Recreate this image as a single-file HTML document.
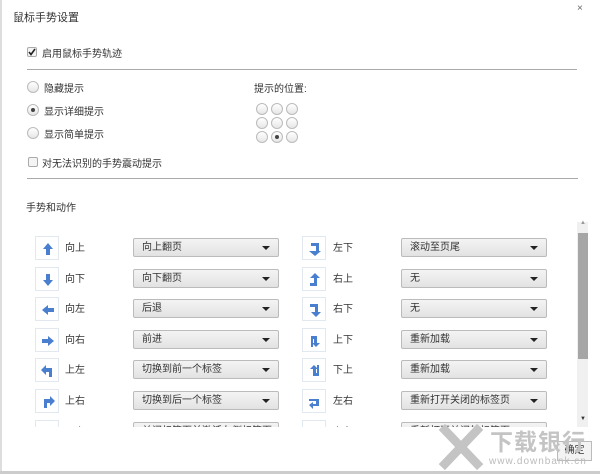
<!DOCTYPE html><html><head><meta charset="utf-8"><style>
*{margin:0;padding:0;box-sizing:border-box}
body{width:600px;height:474px;background:#ccc;position:relative;overflow:hidden;font-family:"Liberation Sans","Noto Sans CJK SC",sans-serif;font-size:10px;color:#333}
.dlg{position:absolute;left:0;top:0;width:600px;height:471px;background:#fff;border-left:2px solid #ddd}
.a{position:absolute;white-space:nowrap}
.hr{position:absolute;height:1px;background:#aaa;left:25px;width:551px}
.rad{position:absolute;width:12px;height:12px;border-radius:50%;border:1px solid #bbb;background:linear-gradient(#fff,#e6e6e6)}
.dot{position:absolute;width:4px;height:4px;border-radius:50%;background:#444;left:3px;top:3px}
.cb{position:absolute;width:10px;height:10px;border:1px solid #aaa;background:#f4f4f4;border-radius:2px}
.ib{position:absolute;width:24px;height:24px;border:1px solid #e2e8f0;background:#fff}
.ib svg{position:absolute;left:4px;top:4px}
.sel{position:absolute;width:146px;height:19px;border:1px solid #bbb;border-radius:2px;background:linear-gradient(#f4f4f4,#e2e2e2);font-size:10px;line-height:17px;padding-left:8px}
.sel:after{content:"";position:absolute;right:8px;top:7px;border-left:4px solid transparent;border-right:4px solid transparent;border-top:4px solid #222}
</style></head><body><div class="dlg">
<div class="a" style="left:11px;top:9px;font-size:11px">鼠标手势设置</div>
<div class="a" style="left:575px;top:3px;font-size:10px;color:#666">×</div>
<div class="cb" style="left:25px;top:47px"><svg style="position:absolute;left:0;top:0" width="8" height="8" viewBox="0 0 8 8"><path d="M1 4L3 6.5L7 1" stroke="#222" stroke-width="1.6" fill="none"/></svg></div>
<div class="a" style="left:40px;top:45px">启用鼠标手势轨迹</div>
<div class="hr" style="top:69px;width:550px"></div>
<div class="rad" style="left:25px;top:81px"></div><div class="a" style="left:42px;top:80px">隐藏提示</div>
<div class="rad" style="left:25px;top:104px"><div class="dot"></div></div><div class="a" style="left:42px;top:103px">显示详细提示</div>
<div class="rad" style="left:25px;top:127px"></div><div class="a" style="left:42px;top:126px">显示简单提示</div>
<div class="a" style="left:252px;top:80px">提示的位置:</div>
<div class="cb" style="left:26px;top:157px"></div><div class="a" style="left:40px;top:155px">对无法识别的手势震动提示</div>
<div class="hr" style="top:178px"></div>
<div class="a" style="left:24px;top:199px">手势和动作</div>
<div id="g"></div>
<div style="position:absolute;left:18px;top:228px;width:556px;height:199px;overflow:hidden" id="rows"></div>
<div style="position:absolute;left:575px;top:222px;width:11px;height:205px;background:#f0f0f0"></div>
<div style="position:absolute;left:576px;top:233px;width:10px;height:126px;background:#a6a6a6"></div>
<div class="a" style="left:578px;top:220px;font-size:6px;color:#999">▲</div>
<div class="a" style="left:578px;top:416px;font-size:6px;color:#333">▼</div>
<div class="a" style="left:555px;top:441px;width:35px;height:20px;border:1px solid #bbb;background:#f3f3f3;font-size:10px;line-height:18px;text-align:center">确定</div>
<svg class="a" style="left:436px;top:424px" width="46" height="46" viewBox="0 0 48 46"><path d="M4 2L44 44M44 2L4 44" stroke="#c4c4c4" stroke-width="9"/></svg>
<div class="a" style="left:488px;top:423px;font-size:23px;color:#c4c4c4;font-weight:bold;letter-spacing:1px">下载银行</div>
<div class="a" style="left:487px;top:456px;font-size:10px;color:#bbb;letter-spacing:1px">www.downbank.cn</div>
</div>
<script>
var g='';var pos=[[256,103],[271,103],[286,103],[256,117],[271,117],[286,117],[256,131],[271,131],[286,131]];
pos.forEach(function(p,i){g+='<div class="rad" style="left:'+(p[0]-2)+'px;top:'+p[1]+'px">'+(i==7?'<div class="dot"></div>':'')+'</div>'});
document.getElementById('g').outerHTML=g;
var L=[['M8 2L3 8H6V14H10V8H13Z','向上','向上翻页'],['M8 14L3 8H6V2H10V8H13Z','向下','向下翻页'],['M2 8L8 3V6H14V10H8V13Z','向左','后退'],['M14 8L8 3V6H2V10H8V13Z','向右','前进'],['M1 7L6 2V5H12V14H9V9H6V12Z','上左','切换到前一个标签'],['M15 7L10 2V5H4V14H7V9H10V12Z','上右','切换到后一个标签'],['M8 2L3 8H6V14H10V8H13Z','下上','关闭标签页并激活左侧标签页']];
var R=[['M12 2V10H14L8 15L2 10H9V5H4V2Z','左下','滚动至页尾'],['M8 1L13 6H10V14H3V11H7V6H3Z','右上','无'],['M3 2V5H8V10H4L9 15L14 10H11V2Z','右下','无'],['M4 14V3H10V10H13L9 14L5 10H7V6H6V14Z','上下','重新加载'],['M12 2V13H6V6H3L7 2L11 6H9V10H10V2Z','下上','重新加载'],['M2 5H12V12H6V15L2 11L6 8V10H9V7H2Z','左右','重新打开关闭的标签页'],['M2 6H14V10H2Z','右左','重新打开关闭的标签页']];
var h='';for(var i=0;i<7;i++){var y=8+i*30.6;
function s(d){return '<svg width="16" height="16" viewBox="0 0 16 16"><path d="'+d+'" fill="#4a7fd0"/></svg>'}
h+='<div class="ib" style="left:15px;top:'+y+'px">'+s(L[i][0])+'</div><div class="a" style="left:45px;top:'+(y+5)+'px;line-height:16px">'+L[i][1]+'</div><div class="sel" style="left:113px;top:'+(y+2)+'px">'+L[i][2]+'</div>';
h+='<div class="ib" style="left:282px;top:'+y+'px">'+s(R[i][0])+'</div><div class="a" style="left:313px;top:'+(y+5)+'px;line-height:16px">'+R[i][1]+'</div><div class="sel" style="left:381px;top:'+(y+2)+'px">'+R[i][2]+'</div>';}
document.getElementById('rows').innerHTML=h;
</script></body></html>
